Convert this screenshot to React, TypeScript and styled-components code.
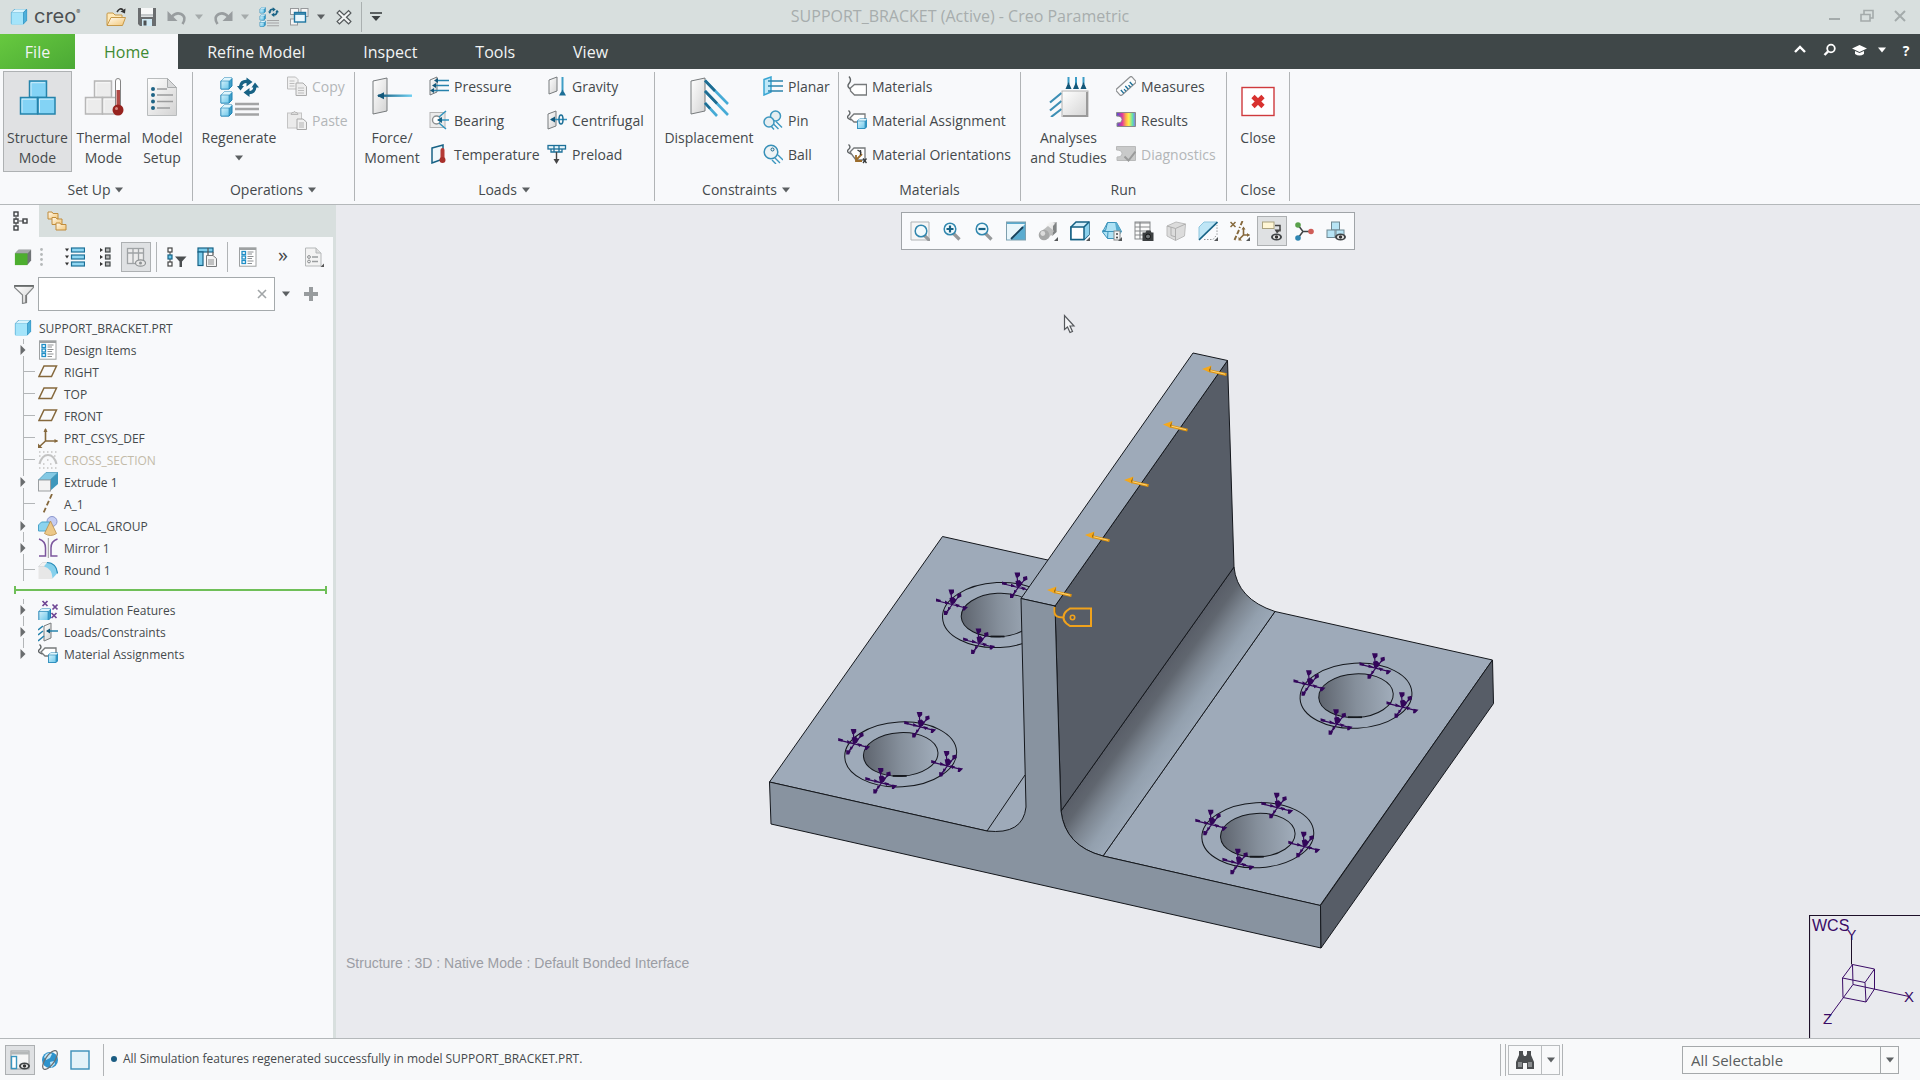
import React from "react";
import styled, { createGlobalStyle, css } from "styled-components";

const GlobalStyle = createGlobalStyle`
  *, *::before, *::after { box-sizing: border-box; }
  html, body, #root { height: 100%; }
  body {
    margin: 0;
    overflow: hidden;
    background: #f8f9fb;
    color: #45494c;
    font-family: "Open Sans", "Noto Sans", sans-serif;
    font-size: 14px;
  }
  button, input, select { font: inherit; color: inherit; }
  svg { display: block; flex: none; }
  ul { list-style: none; margin: 0; padding: 0; }
`;

/* ---------- shared parts ---------- */

const plainButton = css`
  appearance: none;
  border: 0;
  margin: 0;
  padding: 0;
  background: none;
  display: flex;
  align-items: center;
  justify-content: center;
  white-space: nowrap;
`;

const Icon = ({ size = 20, box = 20, children }: { size?: number; box?: number; children: React.ReactNode }) => (
  <svg width={size} height={size} viewBox={`0 0 ${box} ${box}`} fill="none" aria-hidden="true">
    {children}
  </svg>
);

const Caret = ({ color = "#5c6062" }: { color?: string }) => (
  <svg width="10" height="6" viewBox="0 0 10 6" aria-hidden="true">
    <path d="M1 0.500h8L5 5.500z" fill={color} />
  </svg>
);

const HiddenDefs = styled.svg`
  position: absolute;
`;

const Gradients = () => (
  <HiddenDefs width="0" height="0" aria-hidden="true">
    <defs>
      <linearGradient id="blueFace" x1="0" y1="0" x2="1" y2="1">
        <stop offset="0" stopColor="#d4f1fb" />
        <stop offset="1" stopColor="#6cc7ea" />
      </linearGradient>
      <linearGradient id="greyFace" x1="0" y1="0" x2="1" y2="1">
        <stop offset="0" stopColor="#ffffff" />
        <stop offset="1" stopColor="#d3d3d3" />
      </linearGradient>
      <linearGradient id="beam" x1="0" y1="0" x2="1" y2="0">
        <stop offset="0" stopColor="#14587a" />
        <stop offset="1" stopColor="#6fd0f2" />
      </linearGradient>
      <linearGradient id="folder" x1="0" y1="0" x2="1" y2="1">
        <stop offset="0" stopColor="#fffaf0" />
        <stop offset="1" stopColor="#f3c777" />
      </linearGradient>
      <linearGradient id="rainbow" x1="0" y1="0" x2="1" y2="0">
        <stop offset="0" stopColor="#4b4fd8" />
        <stop offset="0.300" stopColor="#e0389c" />
        <stop offset="0.500" stopColor="#ffb14a" />
        <stop offset="0.650" stopColor="#fff04a" />
        <stop offset="0.850" stopColor="#5fe0b0" />
        <stop offset="1" stopColor="#8a6ff0" />
      </linearGradient>
    </defs>
  </HiddenDefs>
);

/* ---------- icons ---------- */

const cube = (x: number, y: number, s: number, d: number, stroke = "#1e82b4", fill = "url(#blueFace)") => (
  <>
    <path d={`M${x} ${y + d}l${d} ${-d}h${s}v${s}l${-d} ${d}h${-s}z`} fill="#3f9fc9" stroke={stroke} />
    <path d={`M${x} ${y + d}l${d} ${-d}h${s}l${-d} ${d}z`} fill="#dff5fc" />
    <rect x={x} y={y + d} width={s} height={s} fill={fill} stroke={stroke} strokeWidth="0.600" />
  </>
);

const PartCube = ({ size = 18 }: { size?: number }) => (
  <Icon size={size}>
    <path d="M1 5l4-4h13q1 0 1 1v12l-4 4H2q-1 0-1-1z" fill="#2b8dbd" />
    <path d="M1.500 5l4-3.500h12.500l-3.500 3.500z" fill="#d9f4fd" />
    <path d="M15 5.500l3.500-3.500v12l-3.500 3.500z" fill="#4fb0da" />
    <rect x="1.500" y="5" width="13" height="13.500" fill="#a4e4fa" />
  </Icon>
);

const Plate = ({ x = 0, y = 0, w = 7, h = 15, stroke = "#777b7d" }) => (
  <path d={`M${x} ${y + 3}l${w} -3v${h}l${-w} 3z`} fill="url(#greyFace)" stroke={stroke} />
);

const OpenIcon = () => (
  <Icon>
    <path d="M1 18V7q0-1 1-1h5l2 2h7v4" fill="#ffe9b8" stroke="#c69848" />
    <path d="M1 18.500l4-8h14.500l-3 8z" fill="url(#folder)" stroke="#c69848" />
    <path d="M11 5q3-5 6-2" stroke="#333" strokeWidth="1.600" />
    <path d="M19.500 1.500l-.5 5-4.500-2z" fill="#333" />
  </Icon>
);
const SaveIcon = () => (
  <Icon>
    <path d="M1 1h18v18H3l-2-2z" fill="#6a6d6f" />
    <rect x="4" y="1" width="12" height="9" fill="#f7f8f8" />
    <rect x="4" y="7" width="12" height="2.500" fill="#c4c8ca" />
    <rect x="5" y="12" width="10" height="7" fill="#cfe8f3" />
    <rect x="6.500" y="13.500" width="3" height="5" fill="#4d5052" />
  </Icon>
);
const UndoIcon = ({ flip = false }: { flip?: boolean }) => (
  <Icon>
    <g transform={flip ? "translate(20 0) scale(-1 1)" : undefined}>
      <path d="M5 9.500q4-4.500 9-2.500 6 3 1.500 10" stroke="#989d9f" strokeWidth="2.600" />
      <path d="M.5 4v10h10z" fill="#989d9f" />
    </g>
  </Icon>
);
const Swirl = ({ t = "" }: { t?: string }) => (
  <g transform={t}>
    <path d="M2 7.500Q3 1.800 9 2.500M16.500 7.500Q16 14 10 13.500" stroke="#176285" strokeWidth="3.200" />
    <path d="M8 -1.500l6 4.500-6 4.500zM11 9l-6 4.500 6 4.500zM-1.500 7h7l-3.500 4.500zM13 8.500h7.500l-4-5z" fill="#176285" />
  </g>
);
const RegenIcon = ({ size = 20 }: { size?: number }) => (
  <Icon size={size} box={40}>
    {cube(2, 1, 8, 3)}
    {cube(2, 15, 8, 3)}
    {cube(2, 28, 8, 3)}
    <Swirl t="translate(19.500 2)" />
    <path d="M16 27h24M16 32h24M16 37.500h24" stroke="#a3a4a5" strokeWidth="2.400" />
  </Icon>
);
const WindowsIcon = () => (
  <Icon>
    <rect x="1.500" y="1.500" width="8" height="6" fill="#f6f6f6" stroke="#96999b" />
    <rect x="12" y="1.500" width="7" height="8" fill="#f6f6f6" stroke="#96999b" />
    <rect x="1.500" y="12" width="7" height="6" fill="#f6f6f6" stroke="#96999b" />
    <rect x="5.500" y="5.500" width="11" height="9.500" fill="#e9f7fd" stroke="#1e76a1" strokeWidth="1.400" />
    <path d="M5.500 7h11" stroke="#1e76a1" strokeWidth="1.600" />
  </Icon>
);
const CloseWindowIcon = () => (
  <Icon size={16} box={16}>
    <path d="M3.500 4l9 8.500M12.500 4l-9 8.500" stroke="#555a5c" strokeWidth="4.600" strokeLinecap="square" />
    <path d="M3.500 4l9 8.500M12.500 4l-9 8.500" stroke="#f4f6f6" strokeWidth="2.200" strokeLinecap="square" />
  </Icon>
);

const block = (x: number, y: number, fill: string, stroke: string) => (
  <>
    <rect x={x} y={y} width="17" height="16.500" fill={fill} stroke={stroke} strokeWidth="1.500" />
    <path d={`M${x + 1.500} ${y + 15}V${y + 1.700}h14`} stroke="#fff" strokeOpacity="0.600" />
  </>
);
const StructureIcon = () => (
  <Icon size={40} box={40}>
    {block(11.500, 4, "#83d3f5", "#2583ab")}
    {block(2.500, 20.500, "#83d3f5", "#2583ab")}
    {block(20, 20.500, "#83d3f5", "#2583ab")}
  </Icon>
);
const ThermalIcon = () => (
  <Icon size={40} box={40}>
    {block(10.500, 4, "#ececec", "#b7b7b7")}
    {block(1.500, 20.500, "#ececec", "#b7b7b7")}
    {block(18.500, 20.500, "#ececec", "#b7b7b7")}
    <rect x="31.500" y="1.500" width="5" height="30" rx="2.500" fill="#fff" stroke="#858585" />
    <rect x="32.500" y="13" width="3.500" height="18" fill="#b04a46" />
    <circle cx="34" cy="33" r="5.500" fill="#97231f" />
    <circle cx="32.500" cy="31.500" r="1.500" fill="#d68b86" />
  </Icon>
);
const ModelSetupIcon = () => (
  <Icon size={40} box={40}>
    <path d="M5.500 1.500h20l9 9v28h-29z" fill="url(#greyFace)" stroke="#b9bcbd" />
    <path d="M25.500 1.500v9h9z" fill="#d9dadb" stroke="#a9acad" />
    <path d="M15 12h10M15 18h16M15 24.500h16M15 31h13" stroke="#9b9c9d" strokeWidth="1.500" />
    {[12, 18, 24.500, 31].map((y) => (
      <circle key={y} cx="11" cy={y} r="2" fill="#1f6486" />
    ))}
  </Icon>
);
const CopyIcon = () => (
  <Icon>
    <path d="M.5 1h8l2.500 2.500V13H.5z" fill="#f1f1f1" stroke="#bdbdbd" />
    <path d="M9 7h7l3.500 3.500v9H9z" fill="#ededed" stroke="#acacac" />
    <path d="M2.500 5h5M2.500 7.500h5M2.500 10h5M11 12h6M11 14.500h6M11 17h6" stroke="#bdbdbd" />
  </Icon>
);
const PasteIcon = () => (
  <Icon>
    <rect x=".5" y="3" width="14" height="15" fill="#ebebeb" stroke="#c4c4c4" />
    <path d="M4 4.500l1-2h1.500q1-2.500 2 0H10l1 2z" fill="#dadada" stroke="#b8b8b8" />
    <path d="M10 9h6l3.500 3v7.500H10z" fill="#f1f1f1" stroke="#a8a8a8" />
    <path d="M12 13h5M12 15h5M12 17h5" stroke="#b2b2b2" />
  </Icon>
);
const ForceIcon = () => (
  <Icon size={40} box={40}>
    <Plate x={1} y={1} w={14} h={33} />
    <rect x="6" y="17.500" width="34" height="2.400" fill="url(#beam)" />
    <path d="M5 18.700l7-3.500v7z" fill="#14587a" />
  </Icon>
);
const PressureIcon = () => (
  <Icon>
    <Plate x={1} y={1} w={7} h={15} />
    <path d="M8 4.500h12M5 9.500h15M3 14.500h17" stroke="#2682ac" strokeWidth="1.500" />
    <path d="M5 4.500l4-2.500v5zM3 9.500L7 7v5zM1 14.500L5 12v5z" fill="#14587a" />
  </Icon>
);
const BearingIcon = () => (
  <Icon>
    <rect x="1" y="2.500" width="15" height="15" fill="#ebebeb" stroke="#b3b3b3" />
    <circle cx="7.500" cy="10" r="4" fill="#fff" stroke="#8c8f90" strokeWidth="1.400" />
    <path d="M10 7l7-6M9 10h11M10 13l7 6" stroke="#2f93be" strokeWidth="1.500" />
    <path d="M8 10l5-3v6z" fill="#176285" />
  </Icon>
);
const TemperatureIcon = () => (
  <Icon>
    <path d="M3 4l11-3v14L3 19z" fill="#eef7fb" stroke="#176285" strokeWidth="1.500" />
    <rect x="11.500" y="4" width="4" height="13" rx="2" fill="#b53a35" />
    <circle cx="13.500" cy="16" r="3" fill="#a8302b" />
  </Icon>
);
const GravityIcon = () => (
  <Icon>
    <Plate x={2} y={1} w={8} h={14} />
    <path d="M15.500 1v14" stroke="#3f9ec6" strokeWidth="2" />
    <path d="M12 19.500h7l-3.500-6z" fill="#1c6f97" />
  </Icon>
);
const CentrifugalIcon = () => (
  <Icon>
    <Plate x={1} y={1} w={8} h={15} />
    <path d="M4 9.500h16" stroke="#3390bb" strokeWidth="1.500" />
    <path d="M3 9.500L8 6.500v6z" fill="#14587a" />
    <ellipse cx="14" cy="9.500" rx="2" ry="4.500" stroke="#1c6f97" strokeWidth="1.500" />
  </Icon>
);
const PreloadIcon = () => (
  <Icon>
    <rect x="1" y="1.500" width="17.500" height="3.500" fill="#e8f6fb" stroke="#1d7099" strokeWidth="1.300" />
    <path d="M4 5v3h11V5M7 1.500v6M12 1.500v6" stroke="#1d7099" strokeWidth="1.300" />
    <path d="M9.500 8v8" stroke="#444" strokeWidth="1.400" />
    <path d="M6.500 15h6l-3 5z" fill="#444" />
  </Icon>
);
const DisplacementIcon = () => (
  <Icon size={40} box={40}>
    <Plate x={2} y={1} w={14} h={33} />
    <path d="M16 3.500L39 27M16 14l23 24M16 26l12 13" stroke="#46abd6" strokeWidth="2.600" />
    <path d="M16 3.500L26 14M16 14l12 12.500M16 26l5 5.500" stroke="#1f6c91" strokeWidth="2.600" />
  </Icon>
);
const PlanarIcon = () => (
  <Icon>
    <path d="M1 3.500L8 1v15l-7 3z" fill="#bfe8f8" stroke="#3aa6d3" strokeWidth="1.500" />
    <path d="M5 5h15M5 10h15M5 15h15" stroke="#2c84ad" strokeWidth="1.500" />
  </Icon>
);
const PinIcon = () => (
  <Icon>
    <circle cx="12.500" cy="6" r="5" fill="#e6eef1" stroke="#3d97bf" strokeWidth="1.500" />
    <circle cx="6" cy="12" r="5" fill="#e6eef1" stroke="#3d97bf" strokeWidth="1.500" />
    <path d="M8 16l3 3.500M10.500 14l5 5M13 11.500l6 6" stroke="#3d97bf" strokeWidth="1.400" />
  </Icon>
);
const BallIcon = () => (
  <Icon>
    <circle cx="8" cy="8" r="6.800" fill="#eef3f5" stroke="#3790b8" strokeWidth="1.500" />
    <circle cx="9.500" cy="5.500" r="1.500" stroke="#176285" />
    <path d="M9 16l4 4M12 14l5 5M15 11l5 5" stroke="#3d97bf" strokeWidth="1.400" />
  </Icon>
);
const MaterialsIcon = () => (
  <Icon>
    <path d="M2 .5q3 3.500 0 7t3 6.500" stroke="#606466" strokeWidth="1.400" />
    <path d="M3.500 12l4-3.500H19.500v10.500H7.500L3.500 15z" fill="#fff" stroke="#76797b" strokeWidth="1.300" />
  </Icon>
);
const MaterialAssignIcon = () => (
  <Icon>
    <path d="M1.500 .5q3 2.500 0 5t3 4.500" stroke="#606466" strokeWidth="1.400" />
    <path d="M3 8l4-4h11v8H7z" fill="#fff" stroke="#76797b" strokeWidth="1.300" />
    {cube(10.500, 9, 7.500, 2)}
  </Icon>
);
const MaterialOrientIcon = () => (
  <Icon>
    <path d="M1.500 .5q3 2.500 0 5t3 4.500" stroke="#606466" strokeWidth="1.400" />
    <path d="M3 8l4-4h11v12H9z" fill="#fff" stroke="#76797b" strokeWidth="1.300" />
    <path d="M15 10l-6 6M9 11v6h6" stroke="#9b6c2b" strokeWidth="1.800" />
    <path d="M10.500 6l4 2.500M13.500 6v5M16 14.500l3.500 4.500M19.500 14.500L16 19" stroke="#36393a" strokeWidth="1.300" />
  </Icon>
);
const AnalysesIcon = () => (
  <Icon size={40} box={40}>
    <path d="M19.500 0v7M27 0v7M34.500 0v7" stroke="#3a9cc6" strokeWidth="2" />
    <path d="M16.500 12h6l-3-7zM24 12h6l-3-7zM31.500 12h6l-3-7z" fill="#14587a" />
    <path d="M12.500 16L1 25.500M12.500 24L1 33.500M12.500 32L2 40" stroke="#3d8fb5" strokeWidth="2.200" />
    <rect x="13" y="14" width="26" height="26" fill="url(#greyFace)" stroke="#b3b3b3" />
    <path d="M38 15v24H14" stroke="#9a9a9a" strokeWidth="2" />
  </Icon>
);
const MeasuresIcon = () => (
  <Icon>
    <g transform="rotate(-42 10 10)">
      <rect x="-.5" y="6" width="21" height="8" rx="1.500" fill="#fbfbfb" stroke="#8e9193" strokeWidth="1.200" />
      <path d="M3.500 14V9.500M6.500 14v-3M9.500 14V9.500M12.500 14v-3M15.500 14V9.500" stroke="#1c6f97" strokeWidth="1.300" />
    </g>
  </Icon>
);
const resultsPath = "M.5 2.500h19v14H1V13q5 0 5-3.500T.5 6z";
const ResultsIcon = () => (
  <Icon>
    <path d={resultsPath} fill="url(#rainbow)" stroke="#8a8a8a" />
  </Icon>
);
const DiagnosticsIcon = () => (
  <Icon>
    <path d={resultsPath} fill="#c9caca" stroke="#b9baba" />
    <path d="M8.500 12.500l4 4 7-9" stroke="#9a9b9b" strokeWidth="2" />
  </Icon>
);
const CloseRedIcon = () => (
  <Icon size={40} box={40}>
    <rect x="4" y="10.500" width="32" height="28" fill="#fff" stroke="#cf3a3d" strokeWidth="1.400" />
    <path d="M15 19.500l10 10M25 19.500l-10 10" stroke="#d8322f" strokeWidth="4.600" />
  </Icon>
);

const TreeTabIcon = () => (
  <Icon>
    <path d="M5 6v3M5 12v3M8 10h5" stroke="#4a4d4f" />
    <rect x="3" y="1" width="4" height="4" stroke="#3f4244" strokeWidth="1.400" />
    <rect x="3" y="8" width="4" height="4" stroke="#3f4244" strokeWidth="1.400" />
    <rect x="3" y="15" width="4" height="4" stroke="#3f4244" strokeWidth="1.400" />
    <rect x="12" y="8" width="4" height="4" stroke="#3f4244" strokeWidth="1.400" />
  </Icon>
);
const FolderTabIcon = () => (
  <Icon>
    {[[1, 1], [5, 6.500], [9, 12]].map(([x, y]) => (
      <path key={x} d={`M${x} ${y + 7}V${y}h4l1 1.500h5V${y + 7}z`} fill="url(#folder)" stroke="#c08c3c" />
    ))}
  </Icon>
);
const GreenCubeIcon = () => (
  <Icon size={18}>
    <path d="M1 6l4-4h14v12l-4 4.500" fill="#6f7476" />
    <path d="M1 6l4-4h14l-4 4z" fill="#a5a9aa" />
    <rect x="1" y="6" width="14" height="13" fill="#4dae2f" />
  </Icon>
);
const Grip = () => (
  <Icon>
    {[3, 8, 13, 18].map((y) => (
      <circle key={y} cx="9.500" cy={y - .5} r="1.400" fill="#b5b9ba" />
    ))}
  </Icon>
);
const ExpandAllIcon = () => (
  <Icon>
    {[1, 8, 15].map((y) => (
      <g key={y}>
        <path d={`M0 ${y + .5}h4l-2 3z`} fill="#333" />
        <rect x="6.500" y={y} width="13" height="4" fill="#8fd6f2" stroke="#1c6f97" strokeWidth="1.200" />
      </g>
    ))}
  </Icon>
);
const CollapseAllIcon = () => (
  <Icon>
    {[1, 8, 15].map((y) => (
      <g key={y}>
        <path d={`M0 ${y}v4l3-2z`} fill="#333" />
        <rect x="5.500" y={y} width="4.500" height="4" fill="#b6b8b9" stroke="#44484a" strokeWidth="1.200" />
      </g>
    ))}
  </Icon>
);
const ColumnsEyeIcon = () => (
  <Icon>
    <rect x="1.500" y="1.500" width="16" height="15" fill="#ececec" stroke="#9fa3a5" strokeWidth="1.300" />
    <path d="M1.500 6h16M7 1.500v15M12.500 1.500v15" stroke="#9fa3a5" strokeWidth="1.300" />
    <ellipse cx="14.500" cy="16" rx="5" ry="3.200" fill="#e6e6e6" stroke="#8f9395" strokeWidth="1.200" />
    <circle cx="14.500" cy="16" r="1.500" fill="#8f9395" />
  </Icon>
);
const TreeFilterIcon = () => (
  <Icon>
    <path d="M3 5v3M3 12v3" stroke="#444" />
    <rect x="1" y="1" width="4" height="4" fill="#fff" stroke="#444" strokeWidth="1.200" />
    <rect x="1" y="8" width="4" height="4" fill="#6cc7ea" stroke="#176285" strokeWidth="1.200" />
    <rect x="1" y="15" width="4" height="4" fill="#fff" stroke="#444" strokeWidth="1.200" />
    <path d="M8 9.500h11.500l-4.500 5V20h-2.500v-5.500z" fill="#4b4e50" />
  </Icon>
);
const TreeColumnsIcon = () => (
  <Icon>
    <rect x="1" y="1" width="15" height="4" fill="#7dcdec" stroke="#176285" strokeWidth="1.200" />
    <rect x="1" y="5" width="5" height="13.500" fill="#7dcdec" stroke="#176285" strokeWidth="1.200" />
    <path d="M11 1v7M16 5v3" stroke="#555" strokeWidth="1.200" />
    <path d="M9.500 8.500H16l3.500 3v8h-10z" fill="#f3f3f3" stroke="#77797b" />
    <path d="M11 13h6M11 15h6M11 17h6" stroke="#8d8f90" />
  </Icon>
);
const DesignItemsIcon = () => (
  <Icon>
    <rect x="1.500" y=".8" width="16.500" height="18.400" fill="#fff" stroke="#9ea1a2" />
    <path d="M1.500 2h16.500" stroke="#9ea1a2" strokeWidth="2" />
    {[5.500, 10, 14.500].map((y) => (
      <rect key={y} x="4" y={y - 1} width="3.500" height="3" stroke="#218fc6" strokeWidth="1.300" />
    ))}
    <path d="M9.500 5h6M9.500 7h4.500M9.500 9.500h6M9.500 11.500h4.500M9.500 14h6M9.500 16.500h4.500" stroke="#8d9092" />
  </Icon>
);
const DocSettingsIcon = () => (
  <Icon>
    <path d="M1.500 1h10.500l5 5v13H1.500z" fill="#f3f3f3" stroke="#b5b8b9" />
    <path d="M12 1v5h5" fill="#ddd" stroke="#b5b8b9" />
    <circle cx="5" cy="10" r="1.400" stroke="#8b8e90" />
    <circle cx="5" cy="14.500" r="1.400" stroke="#8b8e90" />
    <path d="M8 10h6M8 14.500h6" stroke="#9b9ea0" strokeWidth="1.400" />
    <path d="M20 16.500V20h-3.500z" fill="#555" />
  </Icon>
);
const FunnelIcon = () => (
  <Icon>
    <path d="M.5 1.500h19v2L12.500 11v7.500l-4 1V11L.5 3.500z" fill="url(#greyFace)" stroke="#858889" strokeWidth="1.200" />
    <path d="M.5 2h19" stroke="#5f6263" strokeWidth="1.600" />
    <path d="M12 11v8" stroke="#777" strokeWidth="1.500" />
  </Icon>
);

const PlaneIcon = () => (
  <Icon>
    <path d="M6 4h12.500L13.500 14.500H1z" stroke="#85683c" strokeWidth="1.500" />
  </Icon>
);
const CsysIcon = () => (
  <Icon>
    <path d="M7.500 1v12h12M7.500 13L1 19" stroke="#85683c" strokeWidth="1.600" />
    <path d="M5.500 4h4L7.500 0zM16.500 11v4l3.500-2zM0 15.500V20h4.500z" fill="#85683c" />
  </Icon>
);
const CrossSectionIcon = () => (
  <Icon>
    <path d="M1 2h18M1 6h3M16 6h3M1 18h18M5 14h3M12 14h3M9 10h2" stroke="#c4c4c4" strokeWidth="1.400" strokeDasharray="1.500 2.500" />
    <path d="M1.500 14Q4 5 10 5t8.500 9" stroke="#c3c3c3" strokeWidth="2.200" />
  </Icon>
);
const ExtrudeIcon = () => (
  <Icon>
    <path d="M.5 8L8 .5h12L12 8z" fill="#83c9e4" stroke="#4c9abb" strokeWidth=".8" />
    <path d="M12 8L20 .5V12l-8 7z" fill="#3e97bc" />
    <rect x=".5" y="8" width="12" height="11" fill="#f3f3f3" stroke="#9b9fa1" />
  </Icon>
);
const AxisIcon = () => (
  <Icon>
    <path d="M14 0L5 20" stroke="#85683c" strokeWidth="1.800" strokeDasharray="5 2.600" />
  </Icon>
);
const GroupIcon = () => (
  <Icon>
    <circle cx="14" cy="5.500" r="5" fill="#c5cdf2" stroke="#8b97cd" />
    <path d="M.5 9l3-3h8v7l-2.500 2H.5z" fill="#8bd3ef" stroke="#4ba4c9" />
    <path d="M12.500 5l6 12.500q-6 4-12 0z" fill="#ecc888" stroke="#b88e49" strokeWidth=".8" />
  </Icon>
);
const MirrorIcon = () => (
  <Icon>
    <path d="M1 1q6.500 2 6.500 9v8H1M19.500 1Q13 3 13 10v8h6.500" stroke="#7b569d" strokeWidth="1.500" />
    <path d="M10.300 0v20" stroke="#9a9a9a" />
  </Icon>
);
const RoundIcon = () => (
  <Icon>
    <path d="M.5 6.500h6q7.500 1 8 12.500H.5z" fill="#e7e7e7" />
    <path d="M.5 6.500l4-4h6.500l-5 4z" fill="#f2f2f2" stroke="#cfd2d3" strokeWidth=".6" />
    <path d="M9 2.500h3Q19 4.500 19.500 13l-5 5.500Q14 8.500 6 6.500z" fill="#86d0ec" />
    <path d="M9 2.500q9.500 .5 10.500 11" stroke="#2b8db9" strokeWidth="1.200" />
  </Icon>
);
const SimulationIcon = () => (
  <Icon>
    {cube(1, 9, 9, 2.500)}
    <path d="M4.500 1l5 5M9.500 1l-5 5M14.500 4.500l5 5M19.500 4.500l-5 5M13.500 13l5 5M18.500 13l-5 5" stroke="#6f4694" strokeWidth="1.700" />
  </Icon>
);
const LoadsTreeIcon = () => (
  <Icon>
    <Plate x={6} y={1} w={7} h={15} />
    <path d="M5 4L0 8M5 9l-5 4M6 14l-6 5M9 9h11" stroke="#2682ac" strokeWidth="1.600" />
    <path d="M8 9l4-2.500v5z" fill="#14587a" />
  </Icon>
);

const lens = (cx = 9) => (
  <>
    <path d={`M${cx + 3.500} 12.500l6 6`} stroke="#96999b" strokeWidth="3.200" />
    <circle cx={cx} cy="8" r="5.800" fill="#f1fafd" stroke="#3287ae" strokeWidth="1.500" />
  </>
);
const corner = <path d="M20 16v4h-4z" fill="#55585a" />;
const eye = (
  <>
    <ellipse cx="14.500" cy="16" rx="5.500" ry="3.500" fill="#404446" />
    <ellipse cx="14.500" cy="16" rx="3.500" ry="2" fill="#e9e9e9" />
    <circle cx="14.500" cy="16" r="1.700" fill="#333" />
  </>
);
const RefitIcon = () => (
  <Icon>
    <path d="M1 1h18v18H1z" fill="#f6f6f6" stroke="#b1b4b5" />
    <g transform="translate(2 2)">{lens(9)}</g>
  </Icon>
);
const ZoomInIcon = () => (
  <Icon>
    {lens(8)}
    <path d="M8 4.500v7M4.500 8h7" stroke="#176285" strokeWidth="2.200" />
  </Icon>
);
const ZoomOutIcon = () => (
  <Icon>
    {lens(8)}
    <path d="M4.500 8h7" stroke="#176285" strokeWidth="2.200" />
  </Icon>
);
const RepaintIcon = () => (
  <Icon>
    <rect x=".5" y="1" width="19" height="18" fill="#5aabcf" stroke="#7e9fae" />
    <path d="M1 3h18L5.500 18.500H1z" fill="#e9f6fb" />
    <path d="M17 6L7 16l-2 2" stroke="#17405a" strokeWidth="1.800" />
  </Icon>
);
const RenderingIcon = () => (
  <Icon>
    <path d="M10 2.500l8.500-1.500v10l-4 4-4.500-3z" fill="#b2b3b3" />
    <circle cx="13" cy="6" r="5" fill="url(#greyFace)" />
    <path d="M18.500 1v10l-3.500 3V5z" fill="#808384" />
    <path d="M5 9l5-4 6 5-6 8z" fill="#bcbdbd" />
    <circle cx="6" cy="14" r="5.300" fill="#a7a8a8" />
    <circle cx="4.800" cy="12.500" r="2.400" fill="#dcdcdc" />
    {corner}
  </Icon>
);
const DisplayStyleIcon = () => (
  <Icon>
    <path d="M1 6l5-5h13v12.500l-5 5H1z" fill="#d4effa" stroke="#146083" strokeWidth="1.500" />
    <path d="M14 6l5-5v12.500l-5 5z" fill="#8cd1ec" />
    <path d="M1 6h13v12.500H1zM14 6l5-5" fill="#fff" stroke="#146083" strokeWidth="1.500" />
    {corner}
  </Icon>
);
const SavedOrientIcon = () => (
  <Icon>
    <path d="M5.500 1.500h9l5 9-5 7h-9L.5 11z" fill="#aee2f5" stroke="#3c93ba" />
    <path d="M13 1.500h1.500l5 9h-5z" fill="#58aed1" />
    <path d="M5.500 1.500l-2 8H.5M.5 10.500h19M6 10.500l-.5 7" stroke="#3c93ba" />
    <rect x="12" y="10" width="6" height="9" fill="#f4f4f4" stroke="#86898a" />
    <circle cx="15" cy="13" r="1" fill="#444" />
    <circle cx="15" cy="16.500" r="1" fill="#444" />
    {corner}
  </Icon>
);
const ViewManagerIcon = () => (
  <Icon>
    <rect x="1" y="1" width="15" height="17" fill="#fafafa" stroke="#85888a" />
    <path d="M1 2h15M1 6h15M1 10h15M1 14h15M6 1v17" stroke="#85888a" strokeWidth="1.200" />
    <path d="M8.500 11.500h3l1-2h4l1 2h2V20h-11z" fill="#3c3f41" />
    <circle cx="14" cy="15.500" r="2.500" fill="#737779" stroke="#111" />
  </Icon>
);
const PerspectiveIcon = () => (
  <Icon>
    <path d="M1 5l9-4 9.500 2-1 12-9 4.500L1 15z" fill="#dcdcdc" stroke="#bcbcbc" />
    <path d="M1 5l8.500 2.500L19.500 3M9.500 7.500v12M5 6v8.500l5 1.500" stroke="#aeaeae" />
  </Icon>
);
const SectionIcon = () => (
  <Icon>
    <path d="M1 6l5-5h13L1 18z" fill="#bfe6f6" stroke="#8fc6de" />
    <path d="M6 18.500h9l4-5V4" stroke="#96999b" strokeDasharray="1.500 1.500" />
    <path d="M1 19L19.500 1" stroke="#176285" strokeWidth="1.700" />
    {corner}
  </Icon>
);
const DatumIcon = () => (
  <Icon>
    <path d="M.5 1l5 5M5.500 1l-5 5" stroke="#85683c" strokeWidth="1.500" />
    <path d="M12.500 0l-3 7M9 9L4.500 19" stroke="#85683c" strokeWidth="1.900" strokeDasharray="4.500 2" />
    <path d="M13.500 7v7h6M13.500 14l-4 4" stroke="#85683c" strokeWidth="1.600" />
    <path d="M11.500 8.500h4l-2-3zM17 12v4l2.500-2zM8.500 16v3.500h3.500z" fill="#85683c" />
    {corner}
  </Icon>
);
const AnnotationIcon = () => (
  <Icon>
    <rect x=".5" y="1" width="11.500" height="6.500" fill="#fff6d5" stroke="#aaa27f" />
    <path d="M13 4.500h5v6" stroke="#444" strokeWidth="1.500" />
    <path d="M12.500 8.500h6.500l-4 4z" fill="#444" />
    {eye}
  </Icon>
);
const SpinCenterIcon = () => (
  <Icon>
    <path d="M4 4l5 6.500L4 17M9 10.500h8" stroke="#3f4446" strokeWidth="1.500" />
    <circle cx="4" cy="4" r="2.800" fill="#59a14b" />
    <circle cx="17" cy="10.500" r="2.800" fill="#cf5d58" />
    <circle cx="4" cy="17" r="2.800" fill="#2f86b2" />
  </Icon>
);
const SimDisplayIcon = () => (
  <Icon>
    <rect x="5.500" y="1" width="8" height="8" fill="#b7e4f5" stroke="#6f8792" />
    <rect x="1" y="9" width="8" height="7.500" fill="#b7e4f5" stroke="#6f8792" />
    <rect x="10" y="9" width="8" height="7.500" fill="#b7e4f5" stroke="#6f8792" />
    {eye}
  </Icon>
);

const NavigatorIcon = () => (
  <Icon>
    <rect x="1" y="1" width="18" height="18" fill="#f6f6f6" stroke="#9a9d9f" />
    <path d="M1 3h18" stroke="#b5b8b9" strokeWidth="3" />
    <rect x="1.500" y="6.500" width="5" height="12" fill="#fff" stroke="#3a95bf" strokeWidth="1.400" />
    {eye}
  </Icon>
);
const GlobeIcon = () => (
  <Icon>
    <circle cx="10" cy="10" r="8" fill="#2e93cc" />
    <path d="M6 4q4-2 6 0l-2 4-4 2-2-3zM10 12l4-1 1 3-4 4z" fill="#bfe6f8" />
    <ellipse cx="10" cy="10" rx="11" ry="4.500" transform="rotate(-55 10 10)" stroke="#6c7072" strokeWidth="1.300" />
  </Icon>
);
const SheetIcon = () => (
  <Icon>
    <rect x="1" y="1" width="18" height="18" fill="#e4f2f8" stroke="#3a8fb8" strokeWidth="1.400" />
  </Icon>
);
const BinocularsIcon = () => (
  <Icon>
    <path d="M4 1h4v3l1 2h2l1-2V1h4v4l3 7v7h-7v-6H8v6H1v-7l3-7z" fill="#4b4e50" />
    <path d="M3 12h4v5H3zM13 12h4v5h-4z" fill="#8a8d8f" />
  </Icon>
);

/* ---------- title bar ---------- */

const Shell = styled.div`
  height: 100%;
  display: flex;
  flex-direction: column;
`;

const TitleBar = styled.header`
  flex: none;
  height: 34px;
  display: grid;
  grid-template-columns: 1fr auto 1fr;
  align-items: center;
  background: #d8dfde;
`;
const TitleSide = styled.div<{ $end?: boolean }>`
  display: flex;
  align-items: center;
  height: 100%;
  justify-content: ${(p) => (p.$end ? "flex-end" : "flex-start")};
  padding: 0 10px;
`;
const Brand = styled.div`
  display: flex;
  align-items: center;
  gap: 6px;
  width: 94px;
  color: #4c5052;
  font-family: "Inter", "Open Sans", sans-serif;
  font-size: 20px;
  line-height: 32px;
`;
const BrandName = styled.span`
  display: flex;
  align-items: flex-start;
  padding-bottom: 2px;
`;
const BrandMark = styled.span`
  font-size: 6px;
  line-height: 24px;
`;
const QuickButton = styled.button<{ $w?: number }>`
  ${plainButton}
  width: ${(p) => p.$w ?? 20}px;
  height: 24px;
`;
const ListButton = styled(QuickButton)`
  width: 8px;
  margin-left: -2px;
`;
const QuickTools = styled.div`
  display: flex;
  align-items: center;
  gap: 10px;
`;
const QuickDivider = styled.span`
  width: 1px;
  height: 30px;
  margin: 0 -2px;
  background: #aab0b0;
`;
const DocTitle = styled.h1`
  margin: 0;
  color: #a7adad;
  font-size: 16px;
  line-height: 32px;
  padding-bottom: 2px;
  font-weight: 400;
  white-space: nowrap;
`;
const WindowButtons = styled.div`
  display: flex;
  gap: 13px;
  color: #a4abab;
`;

/* ---------- tab strip ---------- */

const TabStrip = styled.nav`
  flex: none;
  display: flex;
  height: 35px;
  background: #3f4748;
`;
const Tab = styled.button<{ $kind?: "file" | "active" }>`
  ${plainButton}
  padding: 0 29px;
  font-size: 16px;
  color: #f2f4f4;
  ${(p) => p.$kind === "file" && css`width: 75px; background: linear-gradient(150deg, #67c93f, #4ba935);`}
  ${(p) => p.$kind === "active" && css`background: #f8f9fb; color: #3f8a33;`}
`;
const TabTools = styled.div`
  display: flex;
  align-items: center;
  gap: 10px;
  margin-left: auto;
  padding: 0 4px 3px;
  color: #fff;
`;

/* ---------- ribbon ---------- */

const Ribbon = styled.section`
  flex: none;
  display: flex;
  height: 136px;
  background: #f8f9fb;
  border-bottom: 1px solid #b4b8ba;
`;
const Group = styled.div<{ $width: number }>`
  display: flex;
  flex-direction: column;
  width: ${(p) => p.$width}px;
  padding: 0 1px 2px 0;
  background: linear-gradient(#b1b4b6, #b1b4b6) right 3px / 1px calc(100% - 6px) no-repeat;
`;
const GroupBody = styled.div<{ $pad?: number }>`
  display: flex;
  justify-content: flex-start;
  height: 103px;
  padding-left: ${(p) => p.$pad ?? 0}px;
`;
const GroupLabel = styled.button`
  ${plainButton}
  gap: 4px;
  flex: 1;
  padding-top: 5px;
`;
const BigButton = styled.button<{ $width: number; $pressed?: boolean }>`
  ${plainButton}
  flex-direction: column;
  justify-content: flex-start;
  width: ${(p) => p.$width}px;
  height: 101px;
  margin-top: 2px;
  padding-top: 5px;
  gap: 11px;
  line-height: 20px;
  border: 1px solid ${(p) => (p.$pressed ? "#aeb1b3" : "transparent")};
  background: ${(p) => (p.$pressed ? "#e0e1e3" : "none")};
`;
const BigLabel = styled.span`
  display: flex;
  flex-direction: column;
  align-items: center;
`;
const CaretSlot = styled.span`
  display: flex;
  align-items: center;
  height: 20px;
`;
const SmallColumn = styled.div<{ $width?: number; $inset?: number }>`
  display: flex;
  flex-direction: column;
  width: ${(p) => (p.$width ? `${p.$width}px` : "auto")};
  padding-left: ${(p) => p.$inset ?? 0}px;
`;
const SmallButton = styled.button`
  ${plainButton}
  justify-content: flex-start;
  gap: 5px;
  height: 34px;
  &:disabled { color: #b3b6b8; }
`;

type BigProps = { icon: React.ReactNode; lines: string[]; width: number; pressed?: boolean; menu?: boolean };
const Big = ({ icon, lines, width, pressed, menu }: BigProps) => (
  <BigButton type="button" $width={width} $pressed={pressed} aria-pressed={pressed}>
    {icon}
    <BigLabel>
      {lines.map((l) => (
        <span key={l}>{l}</span>
      ))}
      {menu && (
        <CaretSlot>
          <Caret />
        </CaretSlot>
      )}
    </BigLabel>
  </BigButton>
);
type SmallItem = [React.ReactNode, string, boolean?];
type SmallsProps = { items: SmallItem[]; width?: number; inset?: number };
const Smalls = ({ items, width, inset }: SmallsProps) => (
  <SmallColumn $width={width} $inset={inset}>
    {items.map(([icon, label, disabled]) => (
      <SmallButton type="button" key={label} disabled={disabled}>
        {icon}
        {label}
      </SmallButton>
    ))}
  </SmallColumn>
);
type RibbonGroupProps = { width: number; label: string; menu?: boolean; pad?: number; children: React.ReactNode };
const RibbonGroup = ({ width, label, menu, pad, children }: RibbonGroupProps) => (
  <Group $width={width}>
    <GroupBody $pad={pad}>{children}</GroupBody>
    <GroupLabel type="button">
      {label}
      {menu && <Caret />}
    </GroupLabel>
  </Group>
);

/* ---------- model tree ---------- */

const Workspace = styled.main`
  flex: 1;
  min-height: 0;
  display: flex;
`;
const SidePanel = styled.aside`
  flex: none;
  width: 336px;
  display: flex;
  flex-direction: column;
  background: #f8f9fb;
  border-right: 3px solid #d8dfde;
`;
const PanelTabs = styled.div`
  display: flex;
  height: 32px;
  background: #d8dfde;
`;
const PanelTab = styled.button<{ $active?: boolean }>`
  ${plainButton}
  width: ${(p) => (p.$active ? 39 : 36)}px;
  padding-left: ${(p) => (p.$active ? 3 : 0)}px;
  background: ${(p) => (p.$active ? "#f8f9fb" : "transparent")};
`;
const PanelTools = styled.div`
  display: flex;
  align-items: center;
  height: 40px;
  padding-left: 14px;
`;
const ToolButton = styled.button<{ $pressed?: boolean; $w?: number }>`
  ${plainButton}
  flex: none;
  width: ${(p) => p.$w ?? 30}px;
  height: 30px;
  border: 1px solid ${(p) => (p.$pressed ? "#adb0b2" : "transparent")};
  background: ${(p) => (p.$pressed ? "#dfe1e3" : "none")};
`;
const ToolDivider = styled.span<{ $gap: number }>`
  width: 1px;
  height: 30px;
  margin: 0 ${(p) => p.$gap}px;
  background: #b1b4b6;
`;
const Chevrons = styled.span`
  font-size: 20px;
  line-height: 24px;
  padding-bottom: 4px;
`;
const SearchRow = styled.div`
  display: flex;
  align-items: center;
  height: 34px;
  padding-left: 14px;
`;
const SearchBox = styled.div`
  display: flex;
  align-items: center;
  width: 237px;
  height: 34px;
  margin: 0 1px 0 4px;
  padding-right: 2px;
  background: #fff;
  border: 1px solid #a5aaac;
`;
const SearchInput = styled.input`
  flex: 1;
  min-width: 0;
  height: 30px;
  padding: 0 6px;
  border: 0;
  outline: 0;
  background: transparent;
`;
const SquareButton = styled.button`
  ${plainButton}
  width: 20px;
  height: 24px;
`;
const PlusButton = styled(SquareButton)`
  margin-left: 5px;
`;
const Tree = styled.ul`
  padding: 6px 0 0 14px;
  font-size: 12px;
`;
const TreeRow = styled.li<{ $muted?: boolean }>`
  display: flex;
  align-items: center;
  height: 22px;
  color: ${(p) => (p.$muted ? "#c3bba9" : "inherit")};
`;
const TreeLabel = styled.span<{ $gap?: number }>`
  padding-left: ${(p) => p.$gap ?? 6}px;
  white-space: nowrap;
`;
const Expander = styled.button`
  ${plainButton}
  width: 24px;
  height: 22px;
`;
const InsertBar = styled.li`
  height: 18px;
  display: flex;
  align-items: center;
  margin-right: 6px;
  &::before, &::after { content: ""; width: 2px; height: 8px; background: #6fbf58; }
`;
const InsertLine = styled.span`
  flex: 1;
  height: 2px;
  background: #6fbf58;
`;

type Node = { icon: React.ReactNode; label: string; open?: boolean; muted?: boolean; last?: boolean };
const modelNodes: Node[] = [
  { icon: <DesignItemsIcon />, label: "Design Items", open: true },
  { icon: <PlaneIcon />, label: "RIGHT" },
  { icon: <PlaneIcon />, label: "TOP" },
  { icon: <PlaneIcon />, label: "FRONT" },
  { icon: <CsysIcon />, label: "PRT_CSYS_DEF" },
  { icon: <CrossSectionIcon />, label: "CROSS_SECTION", muted: true },
  { icon: <ExtrudeIcon />, label: "Extrude 1", open: true },
  { icon: <AxisIcon />, label: "A_1" },
  { icon: <GroupIcon />, label: "LOCAL_GROUP", open: true },
  { icon: <MirrorIcon />, label: "Mirror 1", open: true },
  { icon: <RoundIcon />, label: "Round 1" },
];
const simulationNodes: Node[] = [
  { icon: <SimulationIcon />, label: "Simulation Features", open: true },
  { icon: <LoadsTreeIcon />, label: "Loads/Constraints", open: true },
  { icon: <MaterialAssignIcon />, label: "Material Assignments", open: true, last: true },
];
const Branch = ({ node }: { node: Node }) => (
  <TreeRow $muted={node.muted}>
    {node.open ? (
      <Expander type="button" aria-label={`Expand ${node.label}`}>
        <svg width="24" height="22" viewBox="0 0 24 22" aria-hidden="true">
          <path d={node.last ? "M9.500 0v5" : "M9.500 0v5M9.500 17v5"} stroke="#b3b6b8" />
          <path d="M6.500 6v10l5-5z" fill="#6a6d6f" />
        </svg>
      </Expander>
    ) : (
      <svg width="24" height="22" viewBox="0 0 24 22" aria-hidden="true">
        <path d="M9.500 0v22M9.500 10.500H21" stroke="#b3b6b8" />
      </svg>
    )}
    {node.icon}
    <TreeLabel>{node.label}</TreeLabel>
  </TreeRow>
);

/* ---------- graphics area ---------- */

const Viewport = styled.section`
  position: relative;
  flex: 1;
  min-width: 0;
  background: #e9eaee;
  overflow: hidden;
`;
const Model = styled.svg`
  position: absolute;
  inset: 0;
  width: 100%;
  height: 100%;
`;
const ViewTools = styled.div`
  position: absolute;
  top: 7px;
  left: 50%;
  transform: translateX(-50%);
  display: flex;
  align-items: center;
  gap: 2px;
  height: 38px;
  padding: 0 3px;
  background: #f9fafc;
  border: 1px solid #a0a4a8;
`;
const ModeCaption = styled.p`
  position: absolute;
  left: 10px;
  bottom: 65px;
  margin: 0;
  color: #9b9da4;
  font-family: "Liberation Sans", Arial, sans-serif;
  font-size: 14px;
  line-height: 20px;
`;
const Triad = styled.svg`
  position: absolute;
  right: 0;
  bottom: 0;
`;

const HOLES: [number, number][] = [[998.500, 615], [900.700, 754.400], [1356, 695.700], [1257.800, 835.200]];
const ANCHORS: [number, number][] = [[19.500, -28], [-46.500, -11], [46.500, 11], [-19.400, 28]];
const LOADS: [number, number][] = [[1202, 369], [1163, 424.500], [1124, 480], [1085, 535], [1047, 590]];

const Hole = ({ x, y }: { x: number; y: number }) => (
  <g transform={`translate(${x} ${y})`} stroke="#14171c">
    <ellipse rx="56" ry="32.500" transform="rotate(-3)" fill="none" />
    <ellipse rx="37.300" ry="21.800" transform="rotate(-3)" fill="url(#bore)" />
    <path d="M-8 21.500h14" strokeWidth="1.800" />
  </g>
);
const Anchor = ({ x, y }: { x: number; y: number }) => (
  <g transform={`translate(${x} ${y})`} stroke="#33065a" fill="#33065a">
    <path d="M-14 -3L14 4M0 0L-1 -12M-6 8.500L7 -8" fill="none" strokeWidth="1.200" />
    <path d="M-16 -5.500l5 1.500-1 2-4-.5zM-7 -3.500l5 3-5 .5zM3 -.5l5 1.500-3 2.500zM11 2l5 1-3.500 3.500h-2zM-3.500 -14.500h5.500v3l-2 2h-2zM5 -10l4-1 .5 3.500-4 2zM-2.500 -6l4-1 3 3-2 3.500h-4zM-4 3l3 1-3 3.500zM-8 6.500l4.500 1-1.500 3.500h-3z" stroke="none" />
  </g>
);
const LoadArrow = ({ x, y }: { x: number; y: number }) => (
  <g transform={`translate(${x} ${y})`}>
    <path d="M6 1.400l18.500 4.300" stroke="#e0950f" strokeWidth="2.800" />
    <path d="M8 1.600l15 3.600" stroke="#ffd67a" />
    <path d="M0 0l9.500-3.500-1.500 7z" fill="#f5a81c" />
    <path d="M7 1L9 -3l-1 6.500z" fill="#94640c" />
  </g>
);

const BracketModel = () => (
  <Model viewBox="336 205 1584 833" preserveAspectRatio="xMidYMid meet" role="img" aria-label="Support bracket model">
    <defs>
      <linearGradient id="bore" x1="0" x2="1" y1="0" y2="0">
        <stop offset="0" stopColor="#5e646e" />
        <stop offset="0.500" stopColor="#858f9b" />
        <stop offset="1" stopColor="#a1adbb" />
      </linearGradient>
      <linearGradient id="fillet" gradientUnits="userSpaceOnUse" x1="1061" y1="811" x2="1110" y2="846">
        <stop offset="0" stopColor="#595e68" />
        <stop offset="0.200" stopColor="#60666f" />
        <stop offset="0.450" stopColor="#7c8590" />
        <stop offset="0.750" stopColor="#93a0ae" />
        <stop offset="1" stopColor="#9ca9b8" />
      </linearGradient>
    </defs>
    <g stroke="#14171c" strokeLinejoin="round">
      <path d="M769.500 782L942.500 536.500 1050 560.500V850L987 831z" fill="#9eaab9" />
      <path d="M1103 856L1275 611.500 1492.500 660 1320 905.500z" fill="#9eaab9" />
    </g>
    {HOLES.map(([x, y]) => (
      <Hole key={x} x={x} y={y} />
    ))}
    {HOLES.map(([x, y]) =>
      ANCHORS.map(([dx, dy]) => <Anchor key={`${x}:${dx}`} x={x + dx} y={y + dy} />)
    )}
    <path d="M987 831L1025 775" stroke="#14171c" />
    <g stroke="#14171c" strokeLinejoin="round">
      <path d="M1061 811L1234 567q3 32 41 44.500L1103 856q-38-10-42-45z" fill="url(#fillet)" />
      <path d="M1055 606L1227.500 360.500 1234 567 1061 811z" fill="#575d67" />
      <path d="M1021 598.500L1193 353l34.500 7.500L1055 606z" fill="#9eaab9" />
      <path
        d="M769.500 782L987 831q36 4 39-24L1021 598.500l34 7.500 6 205q4 35 42 45l217.500 49.500.5 42.500L771 824z"
        fill="#8893a0"
      />
      <path d="M1320.500 905.500L1492.500 660l1 43.500L1321 948z" fill="#575d67" />
    </g>
    {LOADS.map(([x, y]) => (
      <LoadArrow key={x} x={x} y={y} />
    ))}
    <path
      d="M1054.500 607v5q0 5.500 8.500 5.500M1063.500 617.500q0-4 3-6.500l3.500-2.500h21v17.500h-21l-3.500-2.500q-3-2.500-3-6z"
      fill="none"
      stroke="#f0a21c"
      strokeWidth="2"
    />
    <circle cx="1072.500" cy="617.500" r="2.200" fill="none" stroke="#f0a21c" strokeWidth="1.600" />
    <path d="M1064.500 315.500v14l3-2.500 2.500 5.500 2.500-1-2.500-5.500h4z" fill="#f4f5f7" stroke="#55585c" strokeWidth="1.200" />
  </Model>
);

const WcsTriad = () => (
  <Triad width="111" height="123" viewBox="1809 915 111 123" role="img" aria-label="World coordinate system">
    <path d="M1809.500 1038V915.500H1920" fill="none" stroke="#1d1028" strokeWidth="1.200" />
    <g fill="none" stroke="#3a0b66">
      <path d="M1852.500 964.500l22 4.500-9.500 13.500-22.500-4.500zM1842.500 978l.5 19.500 23 4.500-1-19.500M1866 1002l8.500-13V969M1852.500 964.500l.5 20 56 12M1853 984.500l-25 34" />
      <path d="M1851.500 964.500V936" stroke="#1d1028" />
    </g>
    <g fill="#3a0b66" fontFamily="'Liberation Sans', Arial, sans-serif">
      <text x="1812" y="931" fontSize="16">WCS</text>
      <text x="1847" y="940" fontSize="14">Y</text>
      <text x="1904" y="1002" fontSize="15">X</text>
      <text x="1823" y="1024" fontSize="15">Z</text>
    </g>
  </Triad>
);

const viewIcons: [string, React.ReactNode][] = [
  ["Refit", <RefitIcon />], ["Zoom In", <ZoomInIcon />], ["Zoom Out", <ZoomOutIcon />], ["Repaint", <RepaintIcon />],
  ["Rendering", <RenderingIcon />], ["Display Style", <DisplayStyleIcon />], ["Saved Orientations", <SavedOrientIcon />],
  ["View Manager", <ViewManagerIcon />], ["Perspective", <PerspectiveIcon />], ["Section", <SectionIcon />],
  ["Datum Display", <DatumIcon />], ["Annotation Display", <AnnotationIcon />], ["Spin Center", <SpinCenterIcon />],
  ["Simulation Display", <SimDisplayIcon />],
];

/* ---------- status bar ---------- */

const StatusBar = styled.footer`
  flex: none;
  display: flex;
  align-items: center;
  height: 42px;
  padding: 0 21px 0 5px;
  background: #f8f9fa;
  border-top: 1px solid #b4b8ba;
`;
const StatusDivider = styled.span<{ $left?: number; $right?: number }>`
  width: 1px;
  height: 32px;
  margin: 0 ${(p) => p.$right ?? 0}px 0 ${(p) => p.$left ?? 0}px;
  background: #b1b4b6;
`;
const Message = styled.output`
  display: flex;
  align-items: center;
  gap: 6px;
  flex: 1;
  padding-bottom: 2px;
  font-size: 12px;
  white-space: nowrap;
  &::before {
    content: "";
    width: 6px;
    height: 6px;
    border-radius: 3px;
    background: #1a5c82;
  }
`;
const FindGroup = styled.div`
  display: flex;
  height: 30px;
  border: 1px solid #b9bcbe;
`;
const FindButton = styled.button<{ $w: number }>`
  ${plainButton}
  width: ${(p) => p.$w}px;
  & + & { border-left: 1px solid #b9bcbe; }
`;
const SelectFrame = styled.label`
  display: flex;
  align-items: center;
  position: relative;
  margin-left: 119px;
`;
const FilterSelect = styled.select`
  appearance: none;
  width: 217px;
  height: 28px;
  padding: 0 28px 0 8px;
  border: 1px solid #a5a9ab;
  border-radius: 0;
  background: #f9fafa;
  color: #5a5e60;
  font-size: 15px;
`;
const SelectArrow = styled.span`
  position: absolute;
  top: 1px;
  right: 1px;
  bottom: 1px;
  width: 18px;
  display: flex;
  align-items: center;
  justify-content: center;
  border-left: 1px solid #a5a9ab;
  pointer-events: none;
`;

export default function App() {
  return (
    <Shell>
      <GlobalStyle />
      <Gradients />
      <TitleBar>
        <TitleSide>
          <Brand>
            <PartCube />
            <BrandName>
              creo<BrandMark>®</BrandMark>
            </BrandName>
          </Brand>
          <QuickTools>
            <QuickButton type="button" aria-label="Open" $w={23}><OpenIcon /></QuickButton>
            <QuickButton type="button" aria-label="Save"><SaveIcon /></QuickButton>
            <QuickButton type="button" aria-label="Undo"><UndoIcon /></QuickButton>
            <ListButton type="button" aria-label="Undo list"><Caret color="#a5abab" /></ListButton>
            <QuickButton type="button" aria-label="Redo"><UndoIcon flip /></QuickButton>
            <ListButton type="button" aria-label="Redo list"><Caret color="#a5abab" /></ListButton>
            <QuickButton type="button" aria-label="Regenerate"><RegenIcon /></QuickButton>
            <QuickButton type="button" aria-label="Windows"><WindowsIcon /></QuickButton>
            <ListButton type="button" aria-label="Windows list"><Caret /></ListButton>
            <QuickButton type="button" aria-label="Close window" $w={18}><CloseWindowIcon /></QuickButton>
            <QuickDivider />
            <QuickButton type="button" aria-label="Customize toolbar" $w={12}>
              <svg width="12" height="10" viewBox="0 0 12 10" aria-hidden="true">
                <path d="M0 1h12" stroke="#3c4042" strokeWidth="1.600" />
                <path d="M1.500 4h9L6 9z" fill="#3c4042" />
              </svg>
            </QuickButton>
          </QuickTools>
        </TitleSide>
        <DocTitle>SUPPORT_BRACKET (Active) - Creo Parametric</DocTitle>
        <TitleSide $end>
          <WindowButtons>
            <QuickButton type="button" aria-label="Minimize">
              <Icon><path d="M5 12h11" stroke="currentColor" strokeWidth="2" /></Icon>
            </QuickButton>
            <QuickButton type="button" aria-label="Restore">
              <Icon><path d="M4 7.500h9v6.500H4zM7 7V3.500h9V11h-3" stroke="currentColor" strokeWidth="1.600" /></Icon>
            </QuickButton>
            <QuickButton type="button" aria-label="Close">
              <Icon><path d="M5 4l10 10M15 4L5 14" stroke="currentColor" strokeWidth="2" /></Icon>
            </QuickButton>
          </WindowButtons>
        </TitleSide>
      </TitleBar>

      <TabStrip>
        <Tab type="button" $kind="file">File</Tab>
        <Tab type="button" $kind="active">Home</Tab>
        <Tab type="button">Refine Model</Tab>
        <Tab type="button">Inspect</Tab>
        <Tab type="button">Tools</Tab>
        <Tab type="button">View</Tab>
        <TabTools>
          <QuickButton type="button" aria-label="Collapse ribbon">
            <Icon><path d="M5 12l5-5 5 5" stroke="currentColor" strokeWidth="2.400" /></Icon>
          </QuickButton>
          <QuickButton type="button" aria-label="Search">
            <Icon>
              <circle cx="11" cy="8.500" r="3.800" stroke="currentColor" strokeWidth="1.800" />
              <path d="M8 11.500L4.500 15" stroke="currentColor" strokeWidth="2.400" />
            </Icon>
          </QuickButton>
          <QuickButton type="button" aria-label="Learning">
            <Icon>
              <path d="M2 8.500L9.500 5l7.500 3.500L9.500 12zM5 11v3q4.500 3 9 0v-3l-4.500 2z" fill="currentColor" />
            </Icon>
          </QuickButton>
          <ListButton type="button" aria-label="Learning list"><Caret color="#fff" /></ListButton>
          <QuickButton type="button" aria-label="Help"><b>?</b></QuickButton>
        </TabTools>
      </TabStrip>

      <Ribbon>
        <RibbonGroup width={193} label="Set Up" menu pad={3}>
          <Big icon={<StructureIcon />} lines={["Structure", "Mode"]} width={69} pressed />
          <Big icon={<ThermalIcon />} lines={["Thermal", "Mode"]} width={63} />
          <Big icon={<ModelSetupIcon />} lines={["Model", "Setup"]} width={54} />
        </RibbonGroup>
        <RibbonGroup width={162} label="Operations" menu pad={5}>
          <Big icon={<RegenIcon size={40} />} lines={["Regenerate"]} width={82} menu />
          <Smalls inset={7} items={[[<CopyIcon />, "Copy", true], [<PasteIcon />, "Paste", true]]} />
        </RibbonGroup>
        <RibbonGroup width={300} label="Loads" menu>
          <Big icon={<ForceIcon />} lines={["Force/", "Moment"]} width={74} />
          <Smalls
            width={118}
            items={[[<PressureIcon />, "Pressure"], [<BearingIcon />, "Bearing"], [<TemperatureIcon />, "Temperature"]]}
          />
          <Smalls items={[[<GravityIcon />, "Gravity"], [<CentrifugalIcon />, "Centrifugal"], [<PreloadIcon />, "Preload"]]} />
        </RibbonGroup>
        <RibbonGroup width={184} label="Constraints" menu>
          <Big icon={<DisplacementIcon />} lines={["Displacement"]} width={108} />
          <Smalls items={[[<PlanarIcon />, "Planar"], [<PinIcon />, "Pin"], [<BallIcon />, "Ball"]]} />
        </RibbonGroup>
        <RibbonGroup width={182} label="Materials" pad={8}>
          <Smalls
            items={[
              [<MaterialsIcon />, "Materials"],
              [<MaterialAssignIcon />, "Material Assignment"],
              [<MaterialOrientIcon />, "Material Orientations"],
            ]}
          />
        </RibbonGroup>
        <RibbonGroup width={206} label="Run">
          <Big icon={<AnalysesIcon />} lines={["Analyses", "and Studies"]} width={95} />
          <Smalls
            items={[[<MeasuresIcon />, "Measures"], [<ResultsIcon />, "Results"], [<DiagnosticsIcon />, "Diagnostics", true]]}
          />
        </RibbonGroup>
        <RibbonGroup width={63} label="Close" pad={3}>
          <Big icon={<CloseRedIcon />} lines={["Close"]} width={56} />
        </RibbonGroup>
      </Ribbon>

      <Workspace>
        <SidePanel>
          <PanelTabs>
            <PanelTab type="button" $active aria-label="Model Tree"><TreeTabIcon /></PanelTab>
            <PanelTab type="button" aria-label="Folder Browser"><FolderTabIcon /></PanelTab>
          </PanelTabs>
          <PanelTools>
            <ToolButton type="button" aria-label="Model" $w={18}><GreenCubeIcon /></ToolButton>
            <Grip />
            <ToolButton type="button" aria-label="Expand all" $w={46}><ExpandAllIcon /></ToolButton>
            <ToolButton type="button" aria-label="Collapse all" $w={23}><CollapseAllIcon /></ToolButton>
            <ToolButton type="button" aria-label="Column display" $pressed><ColumnsEyeIcon /></ToolButton>
            <ToolDivider $gap={5} />
            <ToolButton type="button" aria-label="Tree filters"><TreeFilterIcon /></ToolButton>
            <ToolButton type="button" aria-label="Tree columns"><TreeColumnsIcon /></ToolButton>
            <ToolDivider $gap={5} />
            <ToolButton type="button" aria-label="Design items"><DesignItemsIcon /></ToolButton>
            <ToolButton type="button" aria-label="More tools" $w={40}><Chevrons>»</Chevrons></ToolButton>
            <ToolButton type="button" aria-label="Settings" $w={22}><DocSettingsIcon /></ToolButton>
          </PanelTools>
          <SearchRow>
            <FunnelIcon />
            <SearchBox>
              <SearchInput type="text" aria-label="Filter tree" />
              <SquareButton type="button" aria-label="Clear">
                <Icon size={12} box={12}><path d="M2 2l8 8M10 2l-8 8" stroke="#a1a5a7" strokeWidth="1.600" /></Icon>
              </SquareButton>
            </SearchBox>
            <SquareButton type="button" aria-label="Search options"><Caret /></SquareButton>
            <PlusButton type="button" aria-label="Add">
              <Icon size={14} box={14}><path d="M7 0v14M0 7h14" stroke="#989c9e" strokeWidth="4" /></Icon>
            </PlusButton>
          </SearchRow>
          <Tree>
            <TreeRow>
              <PartCube />
              <TreeLabel $gap={7}>SUPPORT_BRACKET.PRT</TreeLabel>
            </TreeRow>
            {modelNodes.map((n) => (
              <Branch key={n.label} node={n} />
            ))}
            <InsertBar>
              <InsertLine />
            </InsertBar>
            {simulationNodes.map((n) => (
              <Branch key={n.label} node={n} />
            ))}
          </Tree>
        </SidePanel>

        <Viewport>
          <BracketModel />
          <ViewTools>
            {viewIcons.map(([label, icon]) => (
              <ToolButton key={label} type="button" aria-label={label} $pressed={label === "Annotation Display"}>
                {icon}
              </ToolButton>
            ))}
          </ViewTools>
          <ModeCaption>Structure : 3D : Native Mode : Default Bonded Interface</ModeCaption>
          <WcsTriad />
        </Viewport>
      </Workspace>

      <StatusBar>
        <ToolButton type="button" aria-label="Navigator" $pressed><NavigatorIcon /></ToolButton>
        <ToolButton type="button" aria-label="Browser"><GlobeIcon /></ToolButton>
        <ToolButton type="button" aria-label="Full screen"><SheetIcon /></ToolButton>
        <StatusDivider $left={8} $right={7} />
        <Message>All Simulation features regenerated successfully in model SUPPORT_BRACKET.PRT.</Message>
        <StatusDivider $right={4} />
        <StatusDivider $right={2} />
        <FindGroup>
          <FindButton type="button" aria-label="Find" $w={32}><BinocularsIcon /></FindButton>
          <FindButton type="button" aria-label="Find options" $w={18}><Caret /></FindButton>
        </FindGroup>
        <StatusDivider $left={2} />
        <SelectFrame>
          <FilterSelect aria-label="Selection filter" defaultValue="all">
            <option value="all">All Selectable</option>
          </FilterSelect>
          <SelectArrow><Caret /></SelectArrow>
        </SelectFrame>
      </StatusBar>
    </Shell>
  );
}
